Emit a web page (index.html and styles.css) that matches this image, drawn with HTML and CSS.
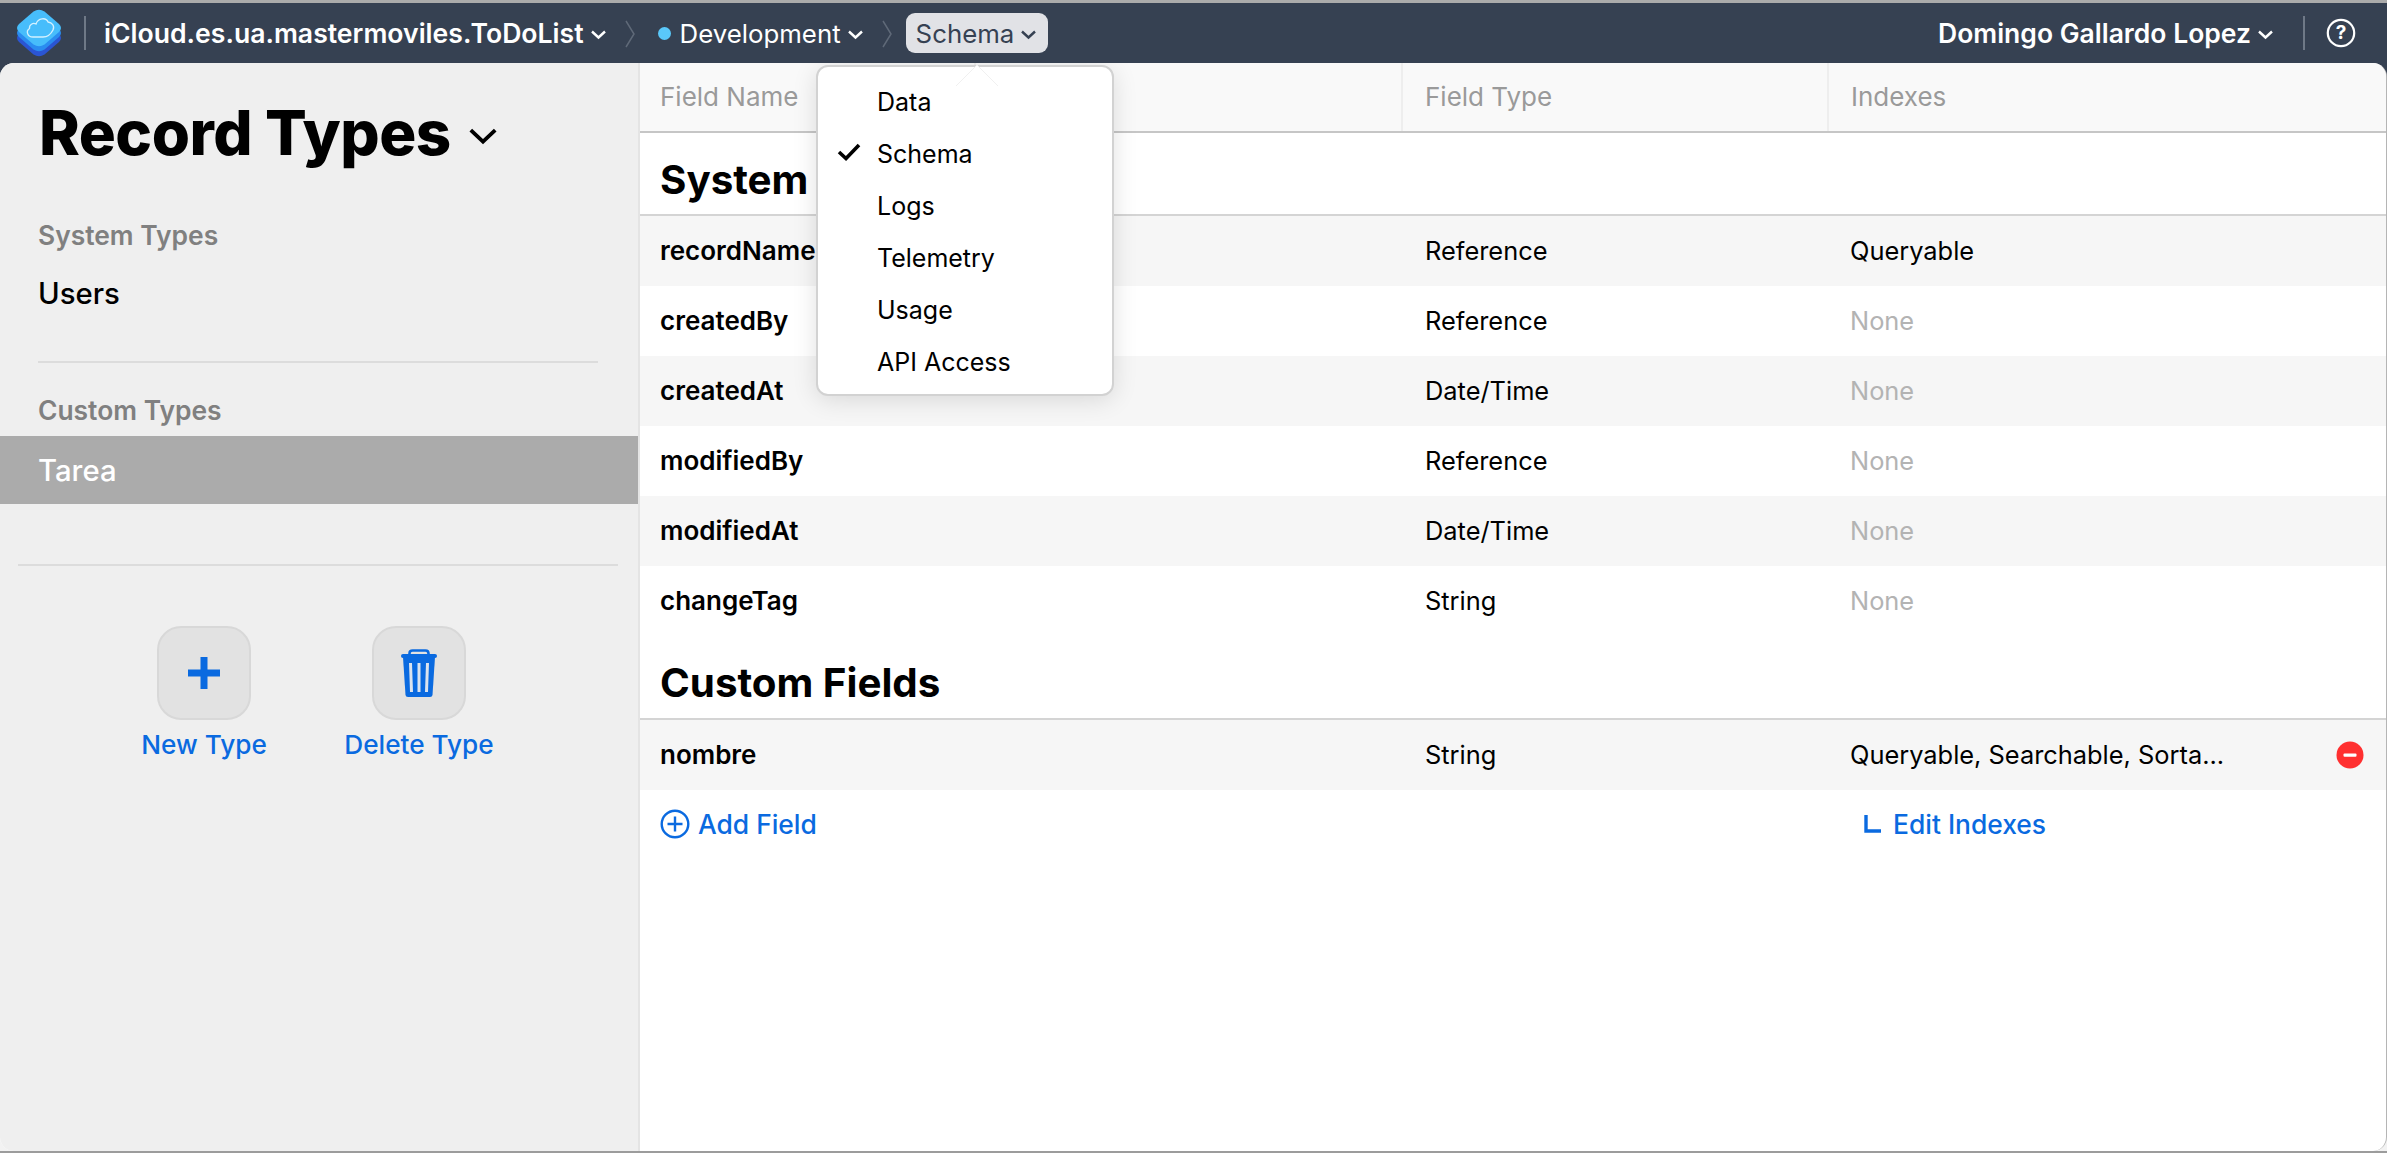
FILE: index.html
```html
<!DOCTYPE html>
<html lang="en">
<head>
<meta charset="utf-8">
<title>CloudKit Console</title>
<link rel="stylesheet" href="styles.css">
</head>
<body>
<div class="window">
  <header class="nav">
    <svg class="logo" viewBox="0 0 50 50" width="50" height="50">
      <path transform="translate(0 10)" d="M19.500 3.500 Q25 0 30.500 3.500 L45 16 Q49 20 45 24 L30.500 36.500 Q25 40 19.500 36.500 L5 24 Q1 20 5 16Z" fill="#2b55d3"/>
      <path transform="translate(0 5)" d="M19.500 3.500 Q25 0 30.500 3.500 L45 16 Q49 20 45 24 L30.500 36.500 Q25 40 19.500 36.500 L5 24 Q1 20 5 16Z" fill="#2a8cf0"/>
      <path d="M19.500 3.500 Q25 0 30.500 3.500 L45 16 Q49 20 45 24 L30.500 36.500 Q25 40 19.500 36.500 L5 24 Q1 20 5 16Z" fill="#47bdfb"/>
      <path d="M19 29 C13.500 29 11.500 23 15.500 20.500 C15 16.500 19 14.500 22 16 C24 10 32 9 34 14 C38 14.500 41 18 39 22 C37 26 33 29 29 29 Z" fill="none" stroke="#d4f1ff" stroke-width="1.300"/>
    </svg>
    <span class="nav-sep"></span>
    <button class="crumb crumb-strong">iCloud.es.ua.mastermoviles.ToDoList
      <svg class="chev" viewBox="0 0 17 11" width="17" height="11"><path d="M2 2.500 8.500 8.500 15 2.500"/></svg>
    </button>
    <svg class="crumb-arrow" viewBox="0 0 10 30" width="10" height="30"><path d="M1 2 9 15 1 28"/></svg>
    <button class="crumb crumb-env"><span class="dot"></span>Development
      <svg class="chev" viewBox="0 0 17 11" width="17" height="11"><path d="M2 2.500 8.500 8.500 15 2.500"/></svg>
    </button>
    <svg class="crumb-arrow" viewBox="0 0 10 30" width="10" height="30"><path d="M1 2 9 15 1 28"/></svg>
    <button class="crumb crumb-active">Schema
      <svg class="chev" viewBox="0 0 17 11" width="17" height="11"><path d="M2 2.500 8.500 8.500 15 2.500"/></svg>
    </button>
    <div class="nav-right">
      <button class="crumb crumb-strong">Domingo Gallardo Lopez
        <svg class="chev" viewBox="0 0 17 11" width="17" height="11"><path d="M2 2.500 8.500 8.500 15 2.500"/></svg>
      </button>
      <span class="nav-sep"></span>
      <svg class="help" viewBox="0 0 30 30" width="30" height="30"><circle cx="15" cy="15" r="13.200"/><text x="15" y="21" text-anchor="middle">?</text></svg>
    </div>
  </header>

  <main class="main">
    <aside class="sidebar">
      <h1 class="title">Record Types
        <svg class="title-chev" viewBox="0 0 22 14" width="30" height="19"><path d="M2 3 11 11.500 20 3"/></svg>
      </h1>
      <section class="side-group">
        <h2 class="side-label">System Types</h2>
        <div class="side-item">Users</div>
      </section>
      <div class="side-rule"></div>
      <section class="side-group side-custom">
        <h2 class="side-label">Custom Types</h2>
        <div class="side-item side-selected">Tarea</div>
      </section>
      <div class="side-rule side-rule-wide"></div>
      <div class="actions">
        <div class="action">
          <span class="action-btn"><svg viewBox="0 0 32 32" width="32" height="32"><path d="M12.500 0h7v12.500H32v7H19.500V32h-7V19.500H0v-7h12.500z" fill="#0a6ae0"/></svg></span>
          <span class="action-label">New Type</span>
        </div>
        <div class="action">
          <span class="action-btn"><svg viewBox="0 0 38 50" width="38" height="50">
            <path d="M9.500 7V5.500Q9.500 2.500 12.500 2.500H25.500Q28.500 2.500 28.500 5.500V7" fill="none" stroke="#0a6ae0" stroke-width="2.600"/>
            <rect x="1" y="6" width="36" height="4" rx="2" fill="#0a6ae0"/>
            <path d="M3 9H35L32.500 47Q32.300 49 30 49H8Q5.700 49 5.500 47Z" fill="#0a6ae0"/>
            <path d="M10.500 15 11.500 44M19 15V44M27.500 15 26.500 44" stroke="#dbe3ee" stroke-width="3" fill="none"/>
          </svg></span>
          <span class="action-label">Delete Type</span>
        </div>
      </div>
    </aside>

    <section class="content">
      <div class="thead">
        <div class="th">Field Name</div>
        <div class="th th-spacer"></div>
        <div class="th">Field Type</div>
        <div class="th">Indexes</div>
      </div>
      <h2 class="section-title section-first">System Fields</h2>
      <div class="rows">
        <div class="row"><b>recordName</b><span>Reference</span><span>Queryable</span></div>
        <div class="row"><b>createdBy</b><span>Reference</span><span class="none">None</span></div>
        <div class="row"><b>createdAt</b><span>Date/Time</span><span class="none">None</span></div>
        <div class="row"><b>modifiedBy</b><span>Reference</span><span class="none">None</span></div>
        <div class="row"><b>modifiedAt</b><span>Date/Time</span><span class="none">None</span></div>
        <div class="row"><b>changeTag</b><span>String</span><span class="none">None</span></div>
      </div>
      <h2 class="section-title section-second">Custom Fields</h2>
      <div class="rows">
        <div class="row"><b>nombre</b><span>String</span>
          <span class="idx-cell"><span>Queryable, Searchable, Sorta...</span>
            <svg class="remove" viewBox="0 0 28 28" width="28" height="28"><circle cx="14" cy="14" r="13.500" fill="#ff3030"/><rect x="7.500" y="12.500" width="13" height="3.200" rx="1" fill="#fff"/></svg>
          </span>
        </div>
      </div>
      <div class="row row-links">
        <a class="link"><svg viewBox="0 0 30 30" width="30" height="30"><circle cx="15" cy="15" r="13.300" fill="none" stroke="#0a6ae0" stroke-width="2.400"/><path d="M15 7.500v15M7.500 15h15" stroke="#0a6ae0" stroke-width="2.400"/></svg>Add Field</a>
        <span></span>
        <a class="link link-edit"><svg viewBox="0 0 18 20" width="18" height="20"><path d="M2 1v16h15" fill="none" stroke="#0a6ae0" stroke-width="3.400"/></svg>Edit Indexes</a>
      </div>
    </section>

    <nav class="menu">
      <svg class="menu-arrow" viewBox="0 0 42 22" width="42" height="22"><path d="M0 21 21 0 42 21"/></svg>
      <div class="menu-item">Data</div>
      <div class="menu-item"><svg class="check" viewBox="0 0 24 18" width="24" height="18"><path d="M2 9 9 15.500 22 2"/></svg>Schema</div>
      <div class="menu-item">Logs</div>
      <div class="menu-item">Telemetry</div>
      <div class="menu-item">Usage</div>
      <div class="menu-item">API Access</div>
    </nav>
  </main>
</div>
</body>
</html>
```

FILE: styles.css
```css
* { box-sizing: border-box; }
html, body { margin: 0; padding: 0; }
body {
  width: 2387px;
  height: 1153px;
  overflow: hidden;
  font-family: Inter, "Liberation Sans", sans-serif;
  color: #000;
  background: #fff;
}
.window {
  height: 1153px;
  display: flex;
  flex-direction: column;
  border-top: 3px solid #ababab;
  border-bottom: 2px solid #9c9c9c;
  background: linear-gradient(#364152 50%, #f2f2f2 50%);
}
.nav {
  height: 60px;
  flex: none;
  display: flex;
  align-items: center;
  padding: 0 31px 0 14px;
  color: #fff;
  background: #364152;
}
.logo { flex: none; }
.nav-sep {
  width: 2px;
  height: 34px;
  background: #6f7987;
  margin: 0 0 0 20px;
  flex: none;
}
.crumb {
  display: flex;
  align-items: center;
  gap: 6px;
  border: 0;
  background: none;
  color: #fff;
  font: 400 25.800px Inter, "Liberation Sans", sans-serif;
  padding: 0;
  white-space: nowrap;
}
.crumb-strong { font-weight: 600; font-size: 26.600px; margin-left: 18px; }
.crumb-active {
  background: #e1e2e6;
  color: #364152;
  height: 40px;
  padding: 0 11px 0 10px;
  border-radius: 9px;
}
.chev { fill: none; stroke: currentColor; stroke-width: 2.400; flex: none; margin-top: 3px; }
.crumb-arrow { fill: none; stroke: #5f6978; stroke-width: 1.500; margin: 2px 23px 0 18px; flex: none; }
.crumb-env + .crumb-arrow { margin-right: 14px; }
.dot { width: 13px; height: 13px; border-radius: 50%; background: #5ac8fa; margin-right: 3px; }
.nav-right { margin-left: auto; display: flex; align-items: center; }
.nav-right .nav-sep { margin-left: 29px; margin-right: 21px; }
.nav-right .crumb-strong { font-size: 26.500px; }
.help { fill: none; stroke: #fff; stroke-width: 2.200; }
.help text { font: 700 19px Inter, sans-serif; fill: #fff; stroke: none; }

.main {
  position: relative;
  flex: 1;
  display: flex;
  min-height: 0;
  border-radius: 14px;
  border-right: 1px solid #b5b5b5;
  overflow: hidden;
  background: #fff;
}
.sidebar {
  width: 640px;
  flex: none;
  background: #efefef;
  border-right: 2px solid #e4e4e4;
  padding-top: 36px;
}
.title {
  margin: 0 0 0 39px;
  font-size: 61.800px;
  line-height: 68px;
  font-weight: 800;
  letter-spacing: -0.5px;
  display: flex;
  align-items: center;
  gap: 17px;
}
.title-chev { fill: none; stroke: #000; stroke-width: 2.800; margin-top: 4px; }
.side-group { margin-top: 53px; }
.side-custom { margin-top: 32px; }
.side-label {
  margin: 0 0 0 38px;
  font-size: 26.400px;
  line-height: 30px;
  font-weight: 600;
  color: #808080;
}
.side-item {
  height: 68px;
  margin-top: 9px;
  padding-left: 38px;
  display: flex;
  align-items: center;
  font-size: 29.300px;
  font-weight: 500;
}
.side-custom .side-item { margin-top: 11px; }
.side-selected { background: #ababab; color: #fff; }
.side-rule { height: 2px; background: #dcdcdc; margin: 34px 40px 0 38px; }
.side-rule-wide { margin: 60px 20px 0 18px; }
.actions { display: flex; justify-content: center; padding-right: 15px; margin-top: 60px; }
.action { width: 215px; display: flex; flex-direction: column; align-items: center; }
.action-btn {
  width: 94px;
  height: 94px;
  display: flex;
  align-items: center;
  justify-content: center;
  border: 2px solid #d8d8d8;
  border-radius: 24px;
  background: #e2e2e2;
}
.action-label { margin-top: 10px; font-size: 26.200px; line-height: 30px; font-weight: 500; color: #0a6ae0; }

.content { flex: 1; min-width: 0; }
.thead {
  height: 70px;
  display: grid;
  grid-template-columns: 336px 427px 426px 1fr;
  background: #f9f9f9;
  border-bottom: 2px solid #c6c6c6;
}
.th {
  padding-left: 20px;
  padding-bottom: 2px;
  display: flex;
  align-items: center;
  font-size: 26px;
  color: #9a9a9a;
  border-right: 2px solid #eeeeee;
}
.th:last-child { border-right: 0; padding-left: 22px; }
.th:nth-child(3) { padding-left: 22px; }
.section-title {
  margin: 0;
  padding-left: 20px;
  font-size: 40.300px;
  font-weight: 700;
  line-height: 48px;
  border-bottom: 2px solid #d4d4d4;
  display: flex;
  align-items: center;
}
.section-first { height: 83px; padding-top: 13px; }
.section-second { height: 84px; padding-top: 12px; }
.row {
  height: 70px;
  display: grid;
  grid-template-columns: 764px 425px 1fr;
  align-items: center;
  padding-left: 20px;
  padding-bottom: 1px;
  font-size: 25.400px;
}
.rows .row:nth-child(odd) { background: #f6f6f6; }
.row b { font-weight: 600; font-size: 26px; }
.row > span { padding-left: 1px; }
.none { color: #b3b3b3; }
.idx-cell { display: flex; align-items: center; justify-content: space-between; padding-right: 22px; }
.row-links { height: 68px; }
.link { display: flex; align-items: center; gap: 8px; color: #0a6ae0; font-weight: 500; font-size: 26.400px; }
.link-edit { margin-left: 15px; gap: 11px; }

.menu {
  position: absolute;
  left: 816px;
  top: 2px;
  width: 298px;
  height: 331px;
  background: #fff;
  border: 2px solid #d2d2d2;
  border-radius: 12px;
  box-shadow: 0 4px 24px rgba(0, 0, 0, 0.12);
  padding-top: 9px;
}
.menu-arrow {
  position: absolute;
  left: 138px;
  top: -2px;
  fill: #fff;
  stroke: #f0f0f0;
  stroke-width: 1;
}
.menu-item {
  position: relative;
  height: 52px;
  padding-left: 59px;
  display: flex;
  align-items: center;
  font-size: 25px;
}
.check {
  position: absolute;
  left: 19px;
  top: 15px;
  fill: none;
  stroke: #000;
  stroke-width: 3.600;
}
```
